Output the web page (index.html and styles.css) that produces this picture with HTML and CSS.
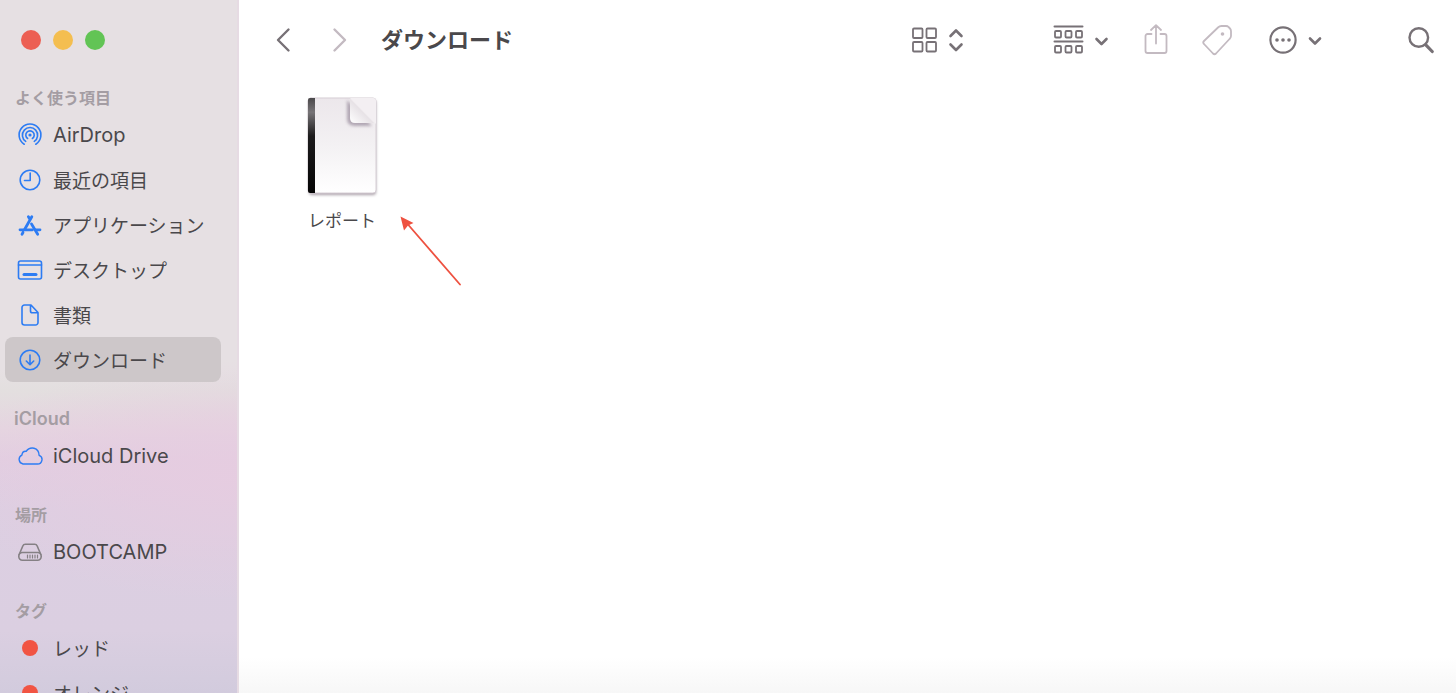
FILE: index.html
```html
<!DOCTYPE html>
<html lang="ja">
<head>
<meta charset="utf-8">
<title>ダウンロード</title>
<link rel="stylesheet" href="styles.css">
</head>
<body>
<div class="window">
  <aside class="sidebar">
    <div class="lights">
      <button class="light light-close" aria-label="閉じる"></button>
      <button class="light light-min" aria-label="しまう"></button>
      <button class="light light-zoom" aria-label="拡大"></button>
    </div>
    <nav>
      <h2 class="heading">よく使う項目</h2>
      <ul class="list">
        <li><a class="item latin" href="#"><svg class="icon" viewBox="0 0 26 26"><circle cx="13" cy="13" r="1.6" fill="currentColor" stroke="none"/><path d="M10.600 16.500a4.200 4.200 0 1 1 4.800 0M8.700 19.400a7.600 7.600 0 1 1 8.600 0M7.200 22.200a10.900 10.900 0 1 1 11.600 0"/></svg>AirDrop</a></li>
        <li><a class="item" href="#"><svg class="icon" viewBox="0 0 26 26"><circle cx="13" cy="13" r="9.800"/><path d="M13.200 6v7.500H7.500"/></svg>最近の項目</a></li>
        <li><a class="item" href="#"><svg class="icon" viewBox="0 0 26 26"><path d="M14.800 4.800 7.600 17.500M11.400 4.800l1.800 3M14.500 12l6.200 10.200" stroke-width="2.800"/><path d="M3 17.800h12.500M18.700 17.800H23M6 20.500l-1 1.700" stroke-width="2.800"/></svg>アプリケーション</a></li>
        <li><a class="item" href="#"><svg class="icon" viewBox="0 0 26 26"><rect x="1.500" y="4" width="23" height="18" rx="2"/><path d="M1.500 8h23"/><path d="M7 17.500h12" stroke-width="3"/></svg>デスクトップ</a></li>
        <li><a class="item" href="#"><svg class="icon" viewBox="0 0 26 26"><path d="M14 3H7.500a2.500 2.500 0 0 0-2.500 2.500v15a2.500 2.500 0 0 0 2.500 2.500h11a2.500 2.500 0 0 0 2.500-2.500V10.500zM13.500 3v6q0 1.800 1.800 1.800H21"/></svg>書類</a></li>
        <li><a class="item selected" href="#" aria-current="page"><svg class="icon" viewBox="0 0 26 26"><circle cx="13" cy="13" r="9.800"/><path d="M13 8v9.500M9.300 14l3.700 3.700 3.700-3.700"/></svg>ダウンロード</a></li>
      </ul>
      <h2 class="heading latin-heading">iCloud</h2>
      <ul class="list">
        <li><a class="item latin" href="#"><svg class="icon icon-thin" viewBox="0 0 26 26"><path d="M6 21H20.400a4.500 4.500 0 0 0 1.700-8.700Q22 6.500 17 5.200 11.800 4.300 9.200 8.300 5.500 7.800 4.900 12.100A4.700 4.700 0 0 0 6 21z"/></svg>iCloud Drive</a></li>
      </ul>
      <h2 class="heading">場所</h2>
      <ul class="list">
        <li><a class="item latin" href="#"><svg class="icon icon-gray" viewBox="0 0 26 26"><path d="M2.200 15.500 5.800 7q.7-1.700 2.500-1.700h9.400q1.800 0 2.500 1.700l3.600 8.500"/><rect x="1.800" y="13.500" width="22.400" height="7.700" rx="3.600"/><path d="M10.500 16v3M13 16v3M15.500 16v3M18 16v3M20.500 16v3" stroke-width="1.200"/></svg>BOOTCAMP</a></li>
      </ul>
      <h2 class="heading">タグ</h2>
      <ul class="list">
        <li><a class="item" href="#"><span class="tag"></span>レッド</a></li>
        <li><a class="item" href="#"><span class="tag"></span>オレンジ</a></li>
      </ul>
    </nav>
  </aside>
  <main class="main">
    <header class="toolbar">
      <button class="tool" aria-label="戻る"><svg width="16" height="26" viewBox="0 0 16 26"><path d="M13.500 2.500 3 13l10.500 10.500" stroke-width="2.400"/></svg></button>
      <button class="tool tool-forward dim" aria-label="進む"><svg width="16" height="26" viewBox="0 0 16 26"><path d="M2.500 2.500 13 13 2.500 23.500" stroke-width="2.400"/></svg></button>
      <h1 class="title">ダウンロード</h1>
      <div class="tools">
        <button class="tool view" aria-label="表示"><svg width="53" height="28" viewBox="0 0 53 28"><rect x="2" y="2.500" width="9.500" height="9.500" rx="1"/><rect x="15.500" y="2.500" width="9.500" height="9.500" rx="1"/><rect x="2" y="16" width="9.500" height="9.500" rx="1"/><rect x="15.500" y="16" width="9.500" height="9.500" rx="1"/><path d="M39.500 10 45 4.500l5.500 5.500M39.500 18.500 45 24l5.500-5.500" stroke-width="2.600"/></svg></button>
        <button class="tool group" aria-label="グループ"><svg width="56" height="30" viewBox="0 0 56 30"><path d="M1.500 1.500h28M1.500 16.500h28" stroke-width="2"/><rect x="2" y="6" width="6" height="6.500" rx="1"/><rect x="12.500" y="6" width="6" height="6.500" rx="1"/><rect x="23" y="6" width="6" height="6.500" rx="1"/><rect x="2" y="21" width="6" height="6.500" rx="1"/><rect x="12.500" y="21" width="6" height="6.500" rx="1"/><rect x="23" y="21" width="6" height="6.500" rx="1"/><path d="M43.500 14l5 5 5-5" stroke-width="2.600"/></svg></button>
        <button class="tool share dim" aria-label="共有"><svg width="24" height="32" viewBox="0 0 24 32"><path d="M7.500 10H3.500a2 2 0 0 0-2 2v15a2 2 0 0 0 2 2h17a2 2 0 0 0 2-2V12a2 2 0 0 0-2-2h-4M12 19.500V1.500M7 6l5-4.800L17 6"/></svg></button>
        <button class="tool tags dim" aria-label="タグ"><svg width="31" height="32" viewBox="0 0 31 32"><path d="M16 3.500Q17.500 2 19.500 2H24q1.700 0 2.500 1l1.500 1.500Q29 5.500 29 7.300V12q0 1.500-1.500 3L14 29.500q-1.500 1.500-3 0L2 20q-1.500-1.500 0-3z"/><circle cx="20.500" cy="10" r="1.800" fill="currentColor" stroke="none"/></svg></button>
        <button class="tool more" aria-label="その他"><svg width="53" height="30" viewBox="0 0 53 30"><circle cx="14" cy="15" r="12.600" stroke-width="2.200"/><g fill="currentColor" stroke="none"><circle cx="8" cy="15" r="1.800"/><circle cx="14" cy="15" r="1.800"/><circle cx="20" cy="15" r="1.800"/></g><path d="M41 13.500l5 5 5-5" stroke-width="2.600"/></svg></button>
        <button class="tool search" aria-label="検索"><svg width="26" height="28" viewBox="0 0 26 28"><circle cx="10.800" cy="11.500" r="9.300" stroke-width="2.400"/><path d="M17.800 18.800l6.400 6.700" stroke-width="3.200"/></svg></button>
      </div>
    </header>
    <section class="files">
      <figure class="file">
        <svg class="paper" width="76" height="104" viewBox="0 0 76 104">
          <defs>
            <linearGradient id="sheet" x1="0" y1="0" x2="0" y2="1"><stop offset="0" stop-color="#ece7eb"/><stop offset=".5" stop-color="#f3f1f3"/><stop offset="1" stop-color="#ffffff"/></linearGradient>
            <linearGradient id="spine" x1="0" y1="0" x2="0" y2="1"><stop offset="0" stop-color="#4a484a"/><stop offset=".15" stop-color="#777477"/><stop offset=".4" stop-color="#1c1b1c"/><stop offset="1" stop-color="#050505"/></linearGradient>
            <linearGradient id="curl" x1="0" y1="1" x2="1" y2="0"><stop offset="0" stop-color="#ffffff"/><stop offset=".5" stop-color="#e6e1e5"/></linearGradient>
            <filter id="soft" x="-30%" y="-30%" width="160%" height="160%"><feGaussianBlur stdDeviation="1.500"/></filter>
          </defs>
          <rect x="5" y="5" width="67" height="95" rx="3" fill="#a99fa8" filter="url(#soft)"/>
          <rect x="4" y="3" width="68" height="95" rx="3" fill="url(#sheet)" stroke="#d6ced5" stroke-width="1"/>
          <path d="M6 3h5v95H6q-2 0-2-2V5q0-2 2-2z" fill="url(#spine)"/>
          <path d="M43 5v19q0 7 8 7h17z" fill="#9d91a0" opacity=".75" filter="url(#soft)"/>
          <path d="M46 3h23q3 0 3 3v23z" fill="#f3eff2"/>
          <path d="M46 4v19q0 5 5 5h19z" fill="url(#curl)"/>
        </svg>
        <figcaption class="caption">レポート</figcaption>
      </figure>
      <svg class="arrow" width="64" height="72" viewBox="0 0 64 72"><path d="M8 8.500 60 68.500" stroke="#ee5140" stroke-width="1.800"/><path d="M0.500 0.500l13 6.500-5.500 2.500-4 5z" fill="#ee5140"/></svg>
    </section>
  </main>
</div>
</body>
</html>
```
FILE: styles.css
```css
* { box-sizing: border-box; }
body { margin: 0; font-family: Inter, "Noto Sans CJK JP", sans-serif; color: #4a484b; background: #fff; }
.window { display: flex; height: 100vh; overflow: hidden; }
.sidebar {
  flex: 0 0 239px;
  overflow: hidden;
  border-right: 2px solid #e6dbe3;
  background:
    radial-gradient(ellipse 300px 120px at 100% 480px, rgba(230, 204, 224, 0.9) 0%, rgba(230, 204, 224, 0.6) 40%, rgba(230, 204, 224, 0) 100%),
    linear-gradient(#e6e0e3 0, #e6e0e3 370px, #e3dfdf 390px, #e5d5e0 430px, #e2cee1 460px, #dccfe2 510px, #dbcfe1 630px, #d2cbdd 100%);
}
.lights { display: flex; gap: 12px; padding: 30px 21px 0; height: 84px; }
.light { width: 20px; height: 20px; padding: 0; border: 0; border-radius: 50%; }
.light-close { background: #ec5f53; }
.light-min { background: #f4be50; }
.light-zoom { background: #62c455; }
.heading { margin: 23px 0 0; padding-left: 15px; font-size: 16px; line-height: 28px; font-weight: 600; color: #a49da3; }
.lights + nav .heading:first-child { margin-top: 0; }
.latin-heading { font-size: 18px; padding-left: 14px; }
.list { margin: 0; padding: 0 16px 0 5px; list-style: none; }
.item { display: flex; align-items: center; gap: 10px; height: 45px; padding-left: 12px; border-radius: 8px; font-size: 19px; color: inherit; text-decoration: none; white-space: nowrap; }
.latin { font-size: 20px; }
.selected { background: #cdc7c9; }
svg { display: block; flex: none; fill: none; stroke: currentColor; stroke-width: 1.8; stroke-linecap: round; stroke-linejoin: round; }
.icon { width: 26px; height: 26px; color: #2d7cf3; stroke-width: 1.6; }
.icon-thin { stroke-width: 1.4; }
.icon-gray { color: #858084; }
.tag { width: 16px; height: 16px; margin: 0 5px; border-radius: 50%; background: #f15443; }
.main { flex: 1; min-width: 0; background: linear-gradient(#fff calc(100% - 36px), #f7f7f7 100%); }
.toolbar { display: flex; align-items: center; height: 80px; padding: 0 22px 0 36px; }
.tool { display: flex; padding: 0; border: 0; background: none; color: #777176; }
.tool-forward { margin-left: 41px; }
.dim { color: #c3bac1; }
.title { margin: 0 0 0 33px; font-size: 22px; line-height: 28px; font-weight: 600; white-space: nowrap; }
.tools { display: flex; align-items: center; margin-left: auto; }
.group { margin-left: 89px; }
.share { margin-left: 35px; }
.tags { margin-left: 34px; }
.more { margin-left: 36px; }
.search { margin-left: 86px; }
.files { position: relative; padding: 15px 65px; }
.file { display: flex; flex-direction: column; align-items: center; width: 76px; margin: 0; }
.paper { stroke: none; }
.caption { margin-top: 8px; font-size: 17px; line-height: 28px; white-space: nowrap; }
.arrow { position: absolute; left: 161px; top: 136px; stroke: none; }
```
